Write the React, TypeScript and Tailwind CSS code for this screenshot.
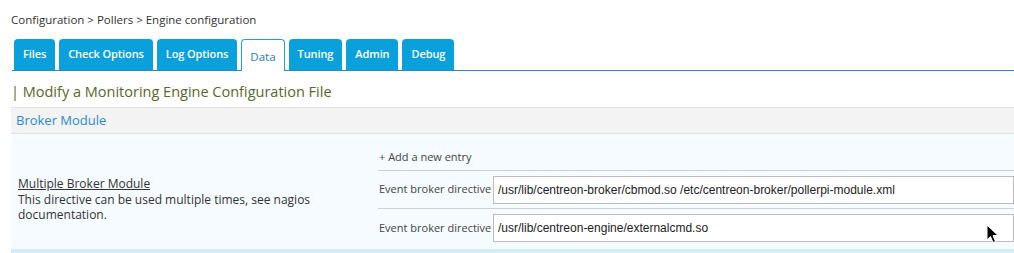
import React from "react";

const tabs = ["Files", "Check Options", "Log Options", "Data", "Tuning", "Admin", "Debug"];
const active = "Data";

const entries = [
  "/usr/lib/centreon-broker/cbmod.so /etc/centreon-broker/pollerpi-module.xml",
  "/usr/lib/centreon-engine/externalcmd.so",
];

function Cursor() {
  return (
    <svg className="absolute left-[986px] top-[224px]" width="14" height="20" viewBox="0 0 14 20">
      <path d="M1 1 L1 16 L4.5 12.5 L7 18.5 L9.5 17.5 L7 11.5 L12 11.5 Z" fill="#000" stroke="#fff" strokeWidth="1" />
    </svg>
  );
}

export default function App() {
  return (
    <div className="relative w-[1014px] h-[253px] overflow-hidden bg-white text-[#333] font-['Open_Sans',sans-serif]">
      <div className="pl-[11px] pt-[12px] text-[11.5px] leading-[16px] text-[#333]">
        Configuration &gt; Pollers &gt; Engine configuration
      </div>

      {/* tabs */}
      <div className="ml-[12px] mt-[11px] pl-[2px] flex gap-[4px] border-b border-[#2b8bb6] h-[32px]">
        {tabs.map((t) => (
          <div
            key={t}
            className={
              t === active
                ? "h-[32px] px-[8px] flex items-center pt-[3px] rounded-t-[4px] border border-b-0 border-[#1e9fd8] bg-white text-[11.5px] text-[#1a7fb8]"
                : "h-[31px] px-[9px] flex items-center rounded-t-[4px] bg-[#0aa0dc] text-[11px] font-semibold tracking-[-0.1px] text-white"
            }
          >
            {t}
          </div>
        ))}
      </div>

      <div className="pl-[11px] mt-[11px] h-[22px] text-[14.5px] leading-[20px] text-[#56692a]">
        | Modify a Monitoring Engine Configuration File
      </div>

      <div className="ml-[11px] mt-[3px]">
        <div className="h-[27px] flex items-center pl-[5px] bg-[#f3f3f3] border-t border-b border-[#e0e0e0] text-[13px] text-[#2a8bd0]">
          Broker Module
        </div>

        <div className="flex h-[115px] bg-[#f5fbfe]">
          <div className="w-[367px] flex flex-col justify-center pl-[7px] pt-[16px] text-[12px] leading-[15.5px]">
            <span className="underline">Multiple Broker Module</span>
            <span>This directive can be used multiple times, see nagios</span>
            <span>documentation.</span>
          </div>
          <div className="flex-1 flex flex-col text-[11px] text-[#444]">
            <div className="h-[37px] flex items-end pb-[5px] pl-[1px] border-b border-[#cfcfcf]">+ Add a new entry</div>
            {entries.map((v, i) => (
              <div key={i} className={"h-[38px] flex items-center gap-[4px] pl-[1px] " + (i === 0 ? "border-b border-[#cfcfcf]" : "")}>
                <span className="w-[110px] whitespace-nowrap">Event broker directive</span>
                <div className="flex-1 h-[28px] flex items-center pl-[4px] bg-white border border-[#bdbdbd] font-['Liberation_Sans',sans-serif] text-[12px] text-[#222]">
                  {v}
                </div>
              </div>
            ))}
          </div>
        </div>
        <div className="h-[6px] bg-[#d3edf8]" />
      </div>
      <Cursor />
    </div>
  );
}
